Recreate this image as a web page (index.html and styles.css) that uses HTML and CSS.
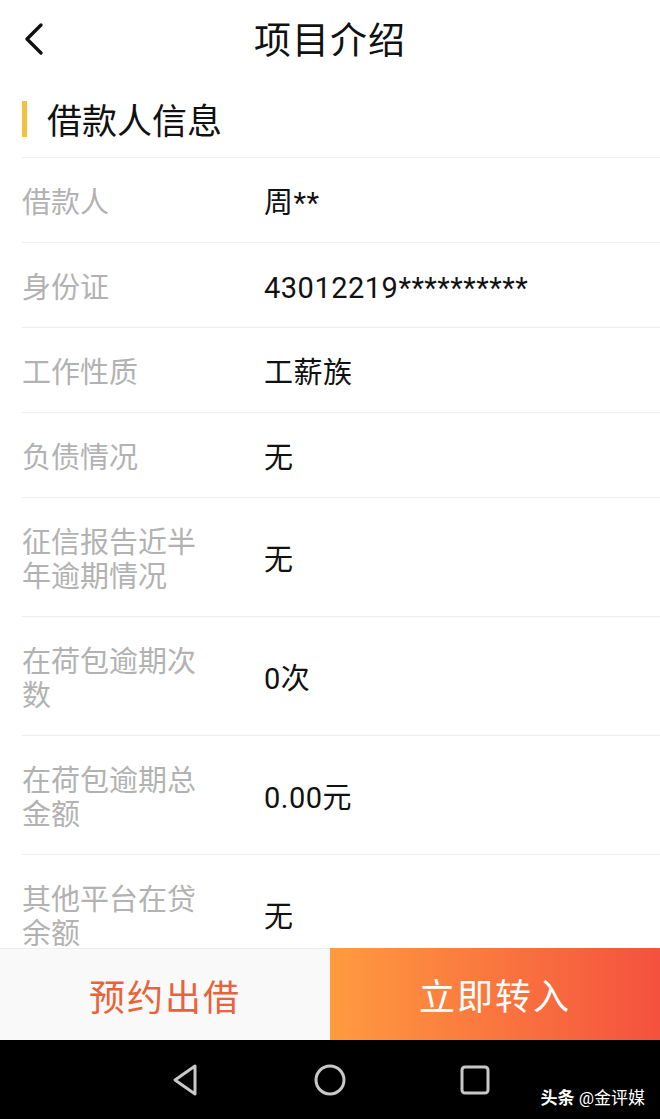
FILE: index.html
```html
<!DOCTYPE html>
<html lang="zh-CN">
  <head>
    <meta charset="UTF-8" />
    <meta name="viewport" content="width=device-width, initial-scale=1.0" />
    <title>项目介绍</title>
    <link rel="stylesheet" href="styles.css">
  </head>
  <body>
    <div class="screen">
      <div class="topbar">
        <svg class="back" width="24" height="34" viewBox="0 0 24 34">
          <path d="M19 3 L5 17 L19 31" fill="none" stroke="#111" stroke-width="3.4" stroke-linecap="round" stroke-linejoin="round" />
        </svg>
        <h1>项目介绍</h1>
      </div>

      <div class="content">
        <div class="section-title">借款人信息</div>
        <div class="row">
          <div class="label">借款人</div>
          <div class="value">周**</div>
        </div>
        <div class="row">
          <div class="label">身份证</div>
          <div class="value">43012219**********</div>
        </div>
        <div class="row">
          <div class="label">工作性质</div>
          <div class="value">工薪族</div>
        </div>
        <div class="row">
          <div class="label">负债情况</div>
          <div class="value">无</div>
        </div>
        <div class="row">
          <div class="label">征信报告近半年逾期情况</div>
          <div class="value">无</div>
        </div>
        <div class="row">
          <div class="label">在荷包逾期次数</div>
          <div class="value">0次</div>
        </div>
        <div class="row">
          <div class="label">在荷包逾期总金额</div>
          <div class="value">0.00元</div>
        </div>
        <div class="row">
          <div class="label">其他平台在贷余额</div>
          <div class="value">无</div>
        </div>
      </div>

      <div class="actions">
        <button class="btn-book">预约出借</button>
        <button class="btn-buy">立即转入</button>
      </div>

      <div class="navbar">
        <svg width="32" height="34" viewBox="0 0 32 34">
          <path d="M26 3 L6 17 L26 31 Z" fill="none" stroke="#c8c8c8" stroke-width="3" stroke-linejoin="round" />
        </svg>
        <svg width="34" height="34" viewBox="0 0 34 34">
          <circle cx="17" cy="17" r="14" fill="none" stroke="#c8c8c8" stroke-width="3" />
        </svg>
        <svg width="32" height="32" viewBox="0 0 32 32">
          <rect x="3" y="3" width="26" height="26" rx="3" fill="none" stroke="#c8c8c8" stroke-width="3" />
        </svg>
        <div class="mark"><b>头条</b> @金评媒</div>
      </div>
    </div>
  </body>
</html>
```

FILE: styles.css
```css
body {
  margin: 0;
  padding: 0;
  background-color: #fff;
  font-family: Roboto, "Noto Sans CJK SC", sans-serif;
  color: #111;
}

.screen {
  width: 660px;
  height: 1119px;
  display: flex;
  flex-direction: column;
  overflow: hidden;
}

.topbar {
  height: 80px;
  display: flex;
  align-items: center;
  justify-content: center;
  position: relative;
}

.back {
  position: absolute;
  left: 22px;
  top: 22px;
}

.topbar h1 {
  margin: -4px 0 0 0;
  font-size: 37px;
  font-weight: 400;
  letter-spacing: 1px;
}

.content {
  flex: 1;
  overflow: hidden;
  padding-left: 22px;
}

.section-title {
  height: 77px;
  display: flex;
  align-items: center;
  font-size: 35px;
  font-weight: 400;
}

.section-title::before {
  content: "";
  width: 5px;
  height: 36px;
  margin-right: 20px;
  background-color: #f2c23e;
}

.row {
  display: flex;
  align-items: center;
  padding: 28px 0 22px 0;
  border-top: 1px solid #eeeeee;
}

.label {
  width: 190px;
  margin-right: 52px;
  font-size: 29px;
  line-height: 34px;
  color: #b2b2b2;
}

.value {
  font-size: 29px;
  line-height: 34px;
  letter-spacing: 0.5px;
}

.actions {
  height: 92px;
  display: flex;
}

.actions button {
  flex: 1;
  border: none;
  font-family: inherit;
  font-size: 36px;
  letter-spacing: 2px;
}

.btn-book {
  background-color: #f9f9f9;
  color: #e8633a;
  border-top: 1px solid #eeeeee !important;
}

.btn-buy {
  background: linear-gradient(to right, #ff9b3f, #f4513e);
  color: #fff;
}

.navbar {
  height: 79px;
  background-color: #000;
  display: flex;
  align-items: center;
  justify-content: center;
  gap: 112px;
  position: relative;
}

.mark {
  position: absolute;
  right: 15px;
  top: 48px;
  font-size: 17px;
  line-height: 20px;
  color: #fff;
}
```
